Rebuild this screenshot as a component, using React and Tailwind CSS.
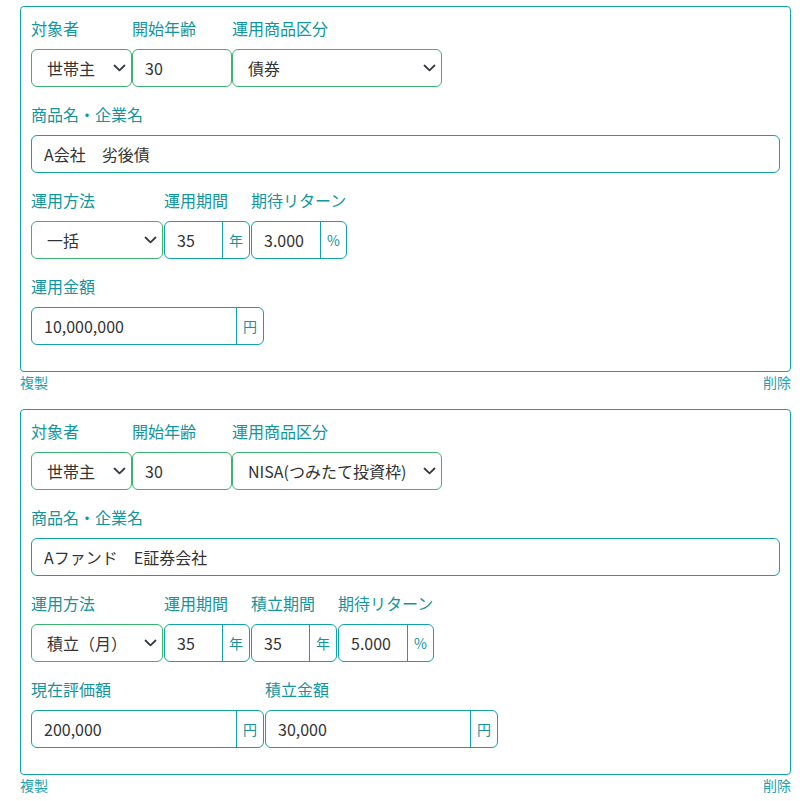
import React from 'react'

const font = { fontFamily: '"Noto Sans CJK JP", "Noto Sans", sans-serif' }

const Chevron = () => (
  <svg className="pointer-events-none absolute right-[6px] top-1/2 -translate-y-1/2" width="13" height="8" viewBox="0 0 13 8" fill="none">
    <path d="M1.5 1.5l5 4.8 5-4.8" stroke="#343a40" strokeWidth="1.8" strokeLinecap="round" strokeLinejoin="round" />
  </svg>
)

const Field = ({ label, className = '', children }) => (
  <div className={`mb-4 ${className}`}>
    <label className="mb-[10px] block text-[16px] leading-[22px] text-[#12959d]">{label}</label>
    {children}
  </div>
)

const Select = ({ value, options }) => (
  <div className="relative">
    <select
      defaultValue={value}
      className="h-[38px] w-full appearance-none rounded-md border border-[#3cb371] bg-white pl-[15px] pr-6 text-[16px] text-[#333] outline-none"
    >
      {options.map((o) => (
        <option key={o}>{o}</option>
      ))}
    </select>
    <Chevron />
  </div>
)

const TextInput = ({ value, valid }) => (
  <input
    defaultValue={value}
    className={`h-[38px] w-full rounded-md border bg-white px-3 text-[16px] text-[#333] outline-none ${valid ? 'border-[#3cb371]' : 'border-[#11a2ab]'}`}
  />
)

const Group = ({ value, unit }) => (
  <div className="flex h-[38px] w-full overflow-hidden rounded-md border border-[#11a2ab] bg-white">
    <input defaultValue={value} className="min-w-0 flex-1 px-3 text-[16px] text-[#333] outline-none" />
    <span className="flex items-center border-l border-[#11a2ab] px-[6px] text-[14px] text-[#12959d]">{unit}</span>
  </div>
)

const Actions = () => (
  <div className="mb-4 flex justify-between text-[14px] leading-[21px] text-[#1ea2ae]">
    <a href="#">複製</a>
    <a href="#">削除</a>
  </div>
)

const App = () => {
  return (
    <div style={font} className="min-h-screen bg-white pl-[20px] pr-[19px] pt-[6px]">
      {/* 債券 */}
      <div className="rounded border border-[#11a2ab] p-[10px]">
        <div className="flex">
          <Field label="対象者" className="w-[101px]">
            <Select value="世帯主" options={['世帯主', '配偶者']} />
          </Field>
          <Field label="開始年齢" className="w-[100px]">
            <TextInput value="30" valid />
          </Field>
          <Field label="運用商品区分" className="w-[210px]">
            <Select value="債券" options={['債券', 'NISA(つみたて投資枠)']} />
          </Field>
        </div>
        <Field label="商品名・企業名">
          <TextInput value="A会社　劣後債" />
        </Field>
        <div className="flex gap-px">
          <Field label="運用方法" className="w-[132px]">
            <Select value="一括" options={['一括', '積立（月）']} />
          </Field>
          <Field label="運用期間" className="w-[86px]">
            <Group value="35" unit="年" />
          </Field>
          <Field label="期待リターン" className="w-[96px]">
            <Group value="3.000" unit="%" />
          </Field>
        </div>
        <Field label="運用金額" className="w-[233px]">
          <Group value="10,000,000" unit="円" />
        </Field>
      </div>
      <Actions />

      {/* NISA */}
      <div className="rounded border border-[#11a2ab] p-[10px]">
        <div className="flex">
          <Field label="対象者" className="w-[101px]">
            <Select value="世帯主" options={['世帯主', '配偶者']} />
          </Field>
          <Field label="開始年齢" className="w-[100px]">
            <TextInput value="30" valid />
          </Field>
          <Field label="運用商品区分" className="w-[210px]">
            <Select value="NISA(つみたて投資枠)" options={['債券', 'NISA(つみたて投資枠)']} />
          </Field>
        </div>
        <Field label="商品名・企業名">
          <TextInput value="Aファンド　E証券会社" />
        </Field>
        <div className="flex gap-px">
          <Field label="運用方法" className="w-[132px]">
            <Select value="積立（月）" options={['一括', '積立（月）']} />
          </Field>
          <Field label="運用期間" className="w-[86px]">
            <Group value="35" unit="年" />
          </Field>
          <Field label="積立期間" className="w-[86px]">
            <Group value="35" unit="年" />
          </Field>
          <Field label="期待リターン" className="w-[96px]">
            <Group value="5.000" unit="%" />
          </Field>
        </div>
        <div className="flex gap-px">
          <Field label="現在評価額" className="w-[233px]">
            <Group value="200,000" unit="円" />
          </Field>
          <Field label="積立金額" className="w-[233px]">
            <Group value="30,000" unit="円" />
          </Field>
        </div>
      </div>
      <Actions />
    </div>
  )
}

export default App
